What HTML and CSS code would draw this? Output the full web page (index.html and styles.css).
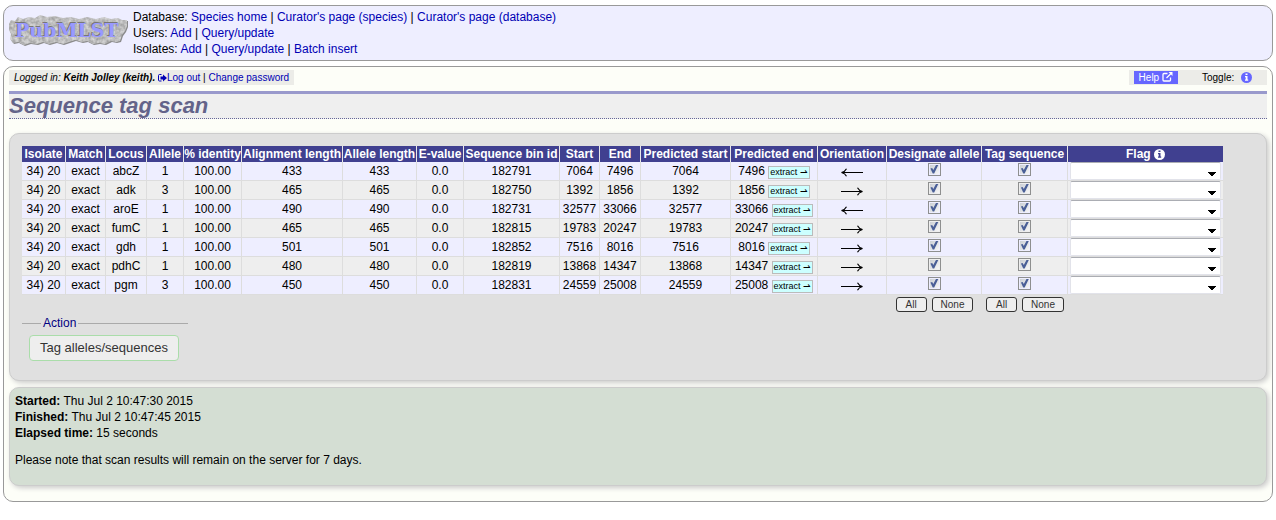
FILE: index.html
```
<!DOCTYPE html>
<html lang="en">
<head>
<meta charset="utf-8">
<title>Sequence tag scan - PubMLST</title>
<link rel="stylesheet" href="styles.css">
</head>
<body>
<svg class="symbols" aria-hidden="true">
  <symbol id="arrow-right" viewBox="0 0 22 9"><path d="M0 4.500H21M16.500 .8Q17.800 3.600 21.500 4.500Q17.800 5.400 16.500 8.200" fill="none" stroke="#000" stroke-width="1.100"/></symbol>
  <symbol id="arrow-left" viewBox="0 0 22 9"><path d="M22 4.500H1M5.500 .8Q4.200 3.600 .5 4.500Q4.200 5.400 5.500 8.200" fill="none" stroke="#000" stroke-width="1.100"/></symbol>
</svg>
<header class="banner">
  <svg class="logo" width="120" height="33" viewBox="0 0 120 33" role="img" aria-label="PubMLST">
    <defs>
      <filter id="stone" x="0" y="0" width="100%" height="100%" color-interpolation-filters="sRGB">
        <feTurbulence type="fractalNoise" baseFrequency="0.3" numOctaves="2" seed="4" result="n"/>
        <feColorMatrix in="n" type="matrix" values="0.35 0 0 0 0.570  0.35 0 0 0 0.570  0.35 0 0 0 0.570  0 0 0 0 1" result="g"/>
        <feComposite in="g" in2="SourceGraphic" operator="in"/>
      </filter>
    </defs>
    <path fill="#8a8a8a" transform="translate(1 1)" d="M0 10L2 6L6 7L9 3L14 5L20 3L26 4L31 1L38 3L46 2L54 4L62 3L70 5L78 3L87 5L95 3L102 5L109 4L113 6L118 6L118 12L116 17L113 21L111 27L107 28L102 27L96 30L90 29L84 30L78 27L73 28L66 26L60 28L54 30L47 28L40 30L34 28L28 30L21 29L15 31L9 28L4 29L1 25L2 20L0 16Z"/>
    <path filter="url(#stone)" d="M0 10L2 6L6 7L9 3L14 5L20 3L26 4L31 1L38 3L46 2L54 4L62 3L70 5L78 3L87 5L95 3L102 5L109 4L113 6L118 6L118 12L116 17L113 21L111 27L107 28L102 27L96 30L90 29L84 30L78 27L73 28L66 26L60 28L54 30L47 28L40 30L34 28L28 30L21 29L15 31L9 28L4 29L1 25L2 20L0 16Z"/>
    <text class="logo-shade" x="5" y="22">PubMLST</text>
    <text class="logo-text" x="6" y="23">PubMLST</text>
  </svg>
  <nav class="menu">
    <div>Database: <a href="#">Species home</a> | <a href="#">Curator's page (species)</a> | <a href="#">Curator's page (database)</a></div>
    <div>Users: <a href="#">Add</a> | <a href="#">Query/update</a></div>
    <div>Isolates: <a href="#">Add</a> | <a href="#">Query/update</a> | <a href="#">Batch insert</a></div>
  </nav>
</header>

<main class="content">
  <div class="topbar">
    <div class="login"><i>Logged in: <b>Keith Jolley (keith).</b></i> <a href="#"><svg class="icon-out" width="9" height="8" viewBox="0 0 9 8" aria-hidden="true"><path d="M3.500 .5H1.500Q.5 .5 .5 1.500V6Q.5 7 1.500 7H3.500" fill="none" stroke="currentColor"/><path d="M2.500 2.500H5V.5L9 4L5 7.500V5.500H2.500Z" fill="currentColor"/></svg>Log out</a> | <a href="#">Change password</a></div>
    <div class="tools">
      <a class="help" href="#">Help <svg width="11" height="10" viewBox="0 0 11 10" aria-hidden="true"><path d="M5.500 1.500H2Q1 1.500 1 2.500V8Q1 9 2 9H7.500Q8.500 9 8.500 8V5.500M4.500 6L9 1.500" fill="none" stroke="currentColor" stroke-width="1.300"/><path d="M6.500 0H10.500V4Z" fill="currentColor"/></svg></a>
      <span class="toggle">Toggle: <a class="info" href="#" aria-label="Toggle information"><svg width="11" height="11" viewBox="0 0 11 11"><circle cx="5.500" cy="5.500" r="5.500" fill="#66f"/><path d="M4.500 1.500h2v1.500h-2zM4 4h2.500v3.500h.7v1.300H4V7.500h.7V5.200H4z" fill="#fff"/></svg></a></span>
    </div>
  </div>
  <h1 class="title">Sequence tag scan</h1>

  <form class="box results">
    <table class="scan">
      <colgroup><col class="w44"><col class="w40"><col class="w41"><col class="w37"><col class="w58"><col class="w101"><col class="w74"><col class="w47"><col class="w96"><col class="w40"><col class="w41"><col class="w90"><col class="w87"><col class="w69"><col class="w95"><col class="w86"><col class="w155"></colgroup>
      <thead>
        <tr><th>Isolate</th><th>Match</th><th>Locus</th><th>Allele</th><th>% identity</th><th>Alignment length</th><th>Allele length</th><th>E-value</th><th>Sequence bin id</th><th>Start</th><th>End</th><th>Predicted start</th><th>Predicted end</th><th>Orientation</th><th>Designate allele</th><th>Tag sequence</th><th>Flag <svg class="icon-flag" width="11" height="11" viewBox="0 0 11 11" aria-hidden="true"><circle cx="5.500" cy="5.500" r="5.500" fill="#fff"/><path d="M4.500 1.500h2v1.500h-2zM4 4h2.500v3.500h.7v1.300H4V7.500h.7V5.200H4z" fill="#404090"/></svg></th></tr>
      </thead>
      <tbody>
        <tr><td>34) 20</td><td>exact</td><td>abcZ</td><td>1</td><td>100.00</td><td>433</td><td>433</td><td>0.0</td><td>182791</td><td>7064</td><td>7496</td><td>7064</td><td>7496 <a class="extract" href="#">extract ⇀</a></td><td><svg class="arrow" role="img" aria-label="reverse"><use href="#arrow-left"/></svg></td><td><input type="checkbox" checked aria-label="Designate allele abcZ"></td><td><input type="checkbox" checked aria-label="Tag sequence abcZ"></td><td class="flag"><select aria-label="Flag abcZ"><option></option></select></td></tr>
        <tr><td>34) 20</td><td>exact</td><td>adk</td><td>3</td><td>100.00</td><td>465</td><td>465</td><td>0.0</td><td>182750</td><td>1392</td><td>1856</td><td>1392</td><td>1856 <a class="extract" href="#">extract ⇀</a></td><td><svg class="arrow" role="img" aria-label="forward"><use href="#arrow-right"/></svg></td><td><input type="checkbox" checked aria-label="Designate allele adk"></td><td><input type="checkbox" checked aria-label="Tag sequence adk"></td><td class="flag"><select aria-label="Flag adk"><option></option></select></td></tr>
        <tr><td>34) 20</td><td>exact</td><td>aroE</td><td>1</td><td>100.00</td><td>490</td><td>490</td><td>0.0</td><td>182731</td><td>32577</td><td>33066</td><td>32577</td><td>33066 <a class="extract" href="#">extract ⇀</a></td><td><svg class="arrow" role="img" aria-label="reverse"><use href="#arrow-left"/></svg></td><td><input type="checkbox" checked aria-label="Designate allele aroE"></td><td><input type="checkbox" checked aria-label="Tag sequence aroE"></td><td class="flag"><select aria-label="Flag aroE"><option></option></select></td></tr>
        <tr><td>34) 20</td><td>exact</td><td>fumC</td><td>1</td><td>100.00</td><td>465</td><td>465</td><td>0.0</td><td>182815</td><td>19783</td><td>20247</td><td>19783</td><td>20247 <a class="extract" href="#">extract ⇀</a></td><td><svg class="arrow" role="img" aria-label="forward"><use href="#arrow-right"/></svg></td><td><input type="checkbox" checked aria-label="Designate allele fumC"></td><td><input type="checkbox" checked aria-label="Tag sequence fumC"></td><td class="flag"><select aria-label="Flag fumC"><option></option></select></td></tr>
        <tr><td>34) 20</td><td>exact</td><td>gdh</td><td>1</td><td>100.00</td><td>501</td><td>501</td><td>0.0</td><td>182852</td><td>7516</td><td>8016</td><td>7516</td><td>8016 <a class="extract" href="#">extract ⇀</a></td><td><svg class="arrow" role="img" aria-label="forward"><use href="#arrow-right"/></svg></td><td><input type="checkbox" checked aria-label="Designate allele gdh"></td><td><input type="checkbox" checked aria-label="Tag sequence gdh"></td><td class="flag"><select aria-label="Flag gdh"><option></option></select></td></tr>
        <tr><td>34) 20</td><td>exact</td><td>pdhC</td><td>1</td><td>100.00</td><td>480</td><td>480</td><td>0.0</td><td>182819</td><td>13868</td><td>14347</td><td>13868</td><td>14347 <a class="extract" href="#">extract ⇀</a></td><td><svg class="arrow" role="img" aria-label="forward"><use href="#arrow-right"/></svg></td><td><input type="checkbox" checked aria-label="Designate allele pdhC"></td><td><input type="checkbox" checked aria-label="Tag sequence pdhC"></td><td class="flag"><select aria-label="Flag pdhC"><option></option></select></td></tr>
        <tr><td>34) 20</td><td>exact</td><td>pgm</td><td>3</td><td>100.00</td><td>450</td><td>450</td><td>0.0</td><td>182831</td><td>24559</td><td>25008</td><td>24559</td><td>25008 <a class="extract" href="#">extract ⇀</a></td><td><svg class="arrow" role="img" aria-label="forward"><use href="#arrow-right"/></svg></td><td><input type="checkbox" checked aria-label="Designate allele pgm"></td><td><input type="checkbox" checked aria-label="Tag sequence pgm"></td><td class="flag"><select aria-label="Flag pgm"><option></option></select></td></tr>
      </tbody>
      <tfoot>
        <tr><td colspan="14"></td><td><div class="pick"><button type="button">All</button><button type="button">None</button></div></td><td><div class="pick"><button type="button">All</button><button type="button">None</button></div></td><td></td></tr>
      </tfoot>
    </table>
    <fieldset class="action">
      <legend>Action</legend>
      <button class="submit" type="submit">Tag alleles/sequences</button>
    </fieldset>
  </form>

  <section class="box status">
    <div><b>Started:</b> Thu Jul 2 10:47:30 2015</div>
    <div><b>Finished:</b> Thu Jul 2 10:47:45 2015</div>
    <div><b>Elapsed time:</b> 15 seconds</div>
    <p>Please note that scan results will remain on the server for 7 days.</p>
  </section>
</main>
</body>
</html>
```
FILE: styles.css
```
* { box-sizing: border-box; }
body {
  margin: 5px 3px 0;
  background: #fff;
  color: #000;
  font: 12px/16px "Liberation Sans", Arial, sans-serif;
}
a { color: #0000b4; text-decoration: none; }
.symbols { display: none; }

.banner {
  display: flex;
  align-items: flex-start;
  gap: 4px;
  padding: 3px 5px;
  border: 1px solid #999;
  border-radius: 10px;
  background: #eef;
}
.logo { flex: none; margin-top: 5px; }
.logo text { font: bold 19px "DejaVu Serif", serif; }
.logo-shade { fill: #777; }
.logo-text { fill: #99f; }

.content {
  margin-top: 5px;
  padding: 3px 5px 15px;
  border: 1px solid #999;
  border-radius: 10px;
  background: #fdfef8;
}
.topbar {
  display: flex;
  justify-content: space-between;
  font-size: 10px;
  line-height: 15px;
}
.login { padding: 0 5px; background: #ecece8; }
.icon-out { vertical-align: -1px; }
.tools {
  display: flex;
  align-items: center;
  gap: 24px;
  padding: 0 15px 0 5px;
  background: #ecece8;
}
.help { padding: 0 5px; background: #66f; color: #fff; line-height: 13px; }
.help svg { vertical-align: -1px; }
.info { margin-left: 4px; }
.info svg { vertical-align: -2px; }

.title {
  margin: 6px 0 14px;
  border-top: 3px solid #99c;
  border-bottom: 1px dotted #669;
  background: #efefef;
  color: #636389;
  font-size: 22px;
  font-style: italic;
  line-height: 24px;
}

.box {
  border: 1px solid #ccc;
  border-radius: 10px;
  box-shadow: 2px 2px 5px #ccc;
}
.results { padding: 12px 12px 19px; background: #e0e0e0; }

.scan {
  width: 1201px;
  table-layout: fixed;
  border-spacing: 0;
  text-align: center;
  white-space: nowrap;
}
.w37 { width: 37px; }
.w40 { width: 40px; }
.w41 { width: 41px; }
.w44 { width: 44px; }
.w47 { width: 47px; }
.w58 { width: 58px; }
.w69 { width: 69px; }
.w74 { width: 74px; }
.w86 { width: 86px; }
.w87 { width: 87px; }
.w90 { width: 90px; }
.w95 { width: 95px; }
.w96 { width: 96px; }
.w101 { width: 101px; }
.w155 { width: 155px; }
.scan th {
  padding: 0;
  border-right: 1px solid #e8e8e8;
  background: #404090;
  color: #fff;
}
.icon-flag { vertical-align: -2px; }
.scan tbody td {
  height: 19px;
  padding: 0;
  border-right: 1px solid #ddd;
  border-bottom: 1px solid #ddd;
  background: #eef;
}
.scan tbody tr:nth-child(even) td { background: #eee; }
.scan th:last-child, .scan tbody td:last-child { border-right: 0; }
.scan tfoot td { padding: 2px 0 0; }

.extract {
  display: inline-block;
  padding: 0 1px;
  border: 1px solid #bbb;
  background: #cff;
  color: #000;
  font-size: 9px;
  line-height: 11px;
}
.arrow { display: block; width: 22px; height: 9px; margin: 2px auto 0; }

input[type="checkbox"] {
  appearance: none;
  display: block;
  width: 13px;
  height: 13px;
  margin: 0 auto 4px;
  padding: 1px;
  border: 1px solid #8e8f8f;
  background: linear-gradient(135deg, #cbcfd5, #f6f6f6) content-box #f4f4f4;
}
input[type="checkbox"]:checked::before {
  content: "";
  display: block;
  width: 9px;
  height: 9px;
  background: #4a5f97;
  clip-path: polygon(10% 45%, 30% 38%, 42% 62%, 75% 0, 100% 0, 52% 100%, 36% 100%);
}

select {
  appearance: none;
  display: block;
  width: 151px;
  height: 18px;
  margin: 0 0 0 2px;
  border: 1px solid #e2e3ea;
  border-top-color: #abadb3;
  border-radius: 2px;
  background:
    linear-gradient(to top right, transparent 50%, #000 50%) right 8px top 9px / 4px 4px no-repeat,
    linear-gradient(to top left, transparent 50%, #000 50%) right 4px top 9px / 4px 4px no-repeat,
    #fff;
}

.pick { display: flex; justify-content: center; gap: 5px; }
.pick button {
  min-width: 31px;
  padding: 0 8px;
  border: 1px solid #333;
  border-radius: 3px;
  background: #eee;
  color: #333;
  font: 10px/13px "Liberation Sans", Arial, sans-serif;
}

.action {
  width: 166px;
  margin: 3px 0 0;
  padding: 4px 7px 0;
  border: 0;
  border-top: 1px solid #aaa;
}
.action legend { margin-left: 12px; padding: 0 2px; color: #000080; }
.submit {
  padding: 4px 10px;
  border: 1px solid #ada;
  border-radius: 4px;
  background: #eee;
  color: #333;
  font: 13px/16px "Liberation Sans", Arial, sans-serif;
}

.status { margin-top: 6px; padding: 5px 5px 17px; background: #d4ded3; }
.status p { margin: 11px 0 0; }
```
